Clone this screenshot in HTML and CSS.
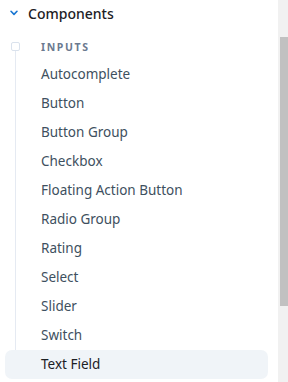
FILE: index.html
```html
<!DOCTYPE html>
<html lang="en">
<head>
    <meta charset="UTF-8">
    <title>Components</title>
    <link rel="stylesheet" href="styles.css">
</head>
<body>
    <div class="frame">
        <nav class="sidebar">
            <div class="group-head">
                <svg class="chevron" width="10" height="6" viewBox="0 0 10 6">
                    <path d="M2 1.3 L5 4.4 L8 1.3" fill="none" stroke="#1976d2" stroke-width="1.6" stroke-linecap="round" stroke-linejoin="round"/>
                </svg>
                <span class="group-title">Components</span>
            </div>
            <div class="tree">
                <div class="section-label">
                    <span class="node"></span>
                    <span>Inputs</span>
                </div>
                <ul class="items">
                    <li class="item">Autocomplete</li>
                    <li class="item">Button</li>
                    <li class="item">Button Group</li>
                    <li class="item">Checkbox</li>
                    <li class="item">Floating Action Button</li>
                    <li class="item">Radio Group</li>
                    <li class="item">Rating</li>
                    <li class="item">Select</li>
                    <li class="item">Slider</li>
                    <li class="item">Switch</li>
                    <li class="item active">Text Field</li>
                </ul>
            </div>
        </nav>
        <div class="scrollbar">
            <div class="thumb"></div>
        </div>
    </div>
</body>
</html>
```

FILE: styles.css
```css
* {
    margin: 0;
    padding: 0;
    box-sizing: border-box;
}

body {
    background: #ffffff;
    font-family: 'Noto Sans', 'Open Sans', sans-serif;
    overflow: hidden;
}

.frame {
    display: flex;
    height: 382px;
}

.sidebar {
    flex: 1;
    overflow: hidden;
}

.group-head {
    display: flex;
    align-items: center;
    height: 26px;
    padding-left: 9px;
}

.chevron {
    margin-right: 9px;
}

.group-title {
    font-size: 14px;
    color: #1c2025;
    font-weight: 500;
}

.tree {
    margin-top: 16px;
    margin-left: 15px;
    border-left: 1px solid #e5eaf2;
}

.section-label {
    display: flex;
    align-items: center;
    height: 9px;
    margin-left: -5px;
    font-size: 10.5px;
    font-weight: 700;
    letter-spacing: 1.6px;
    text-transform: uppercase;
    color: #6b7a90;
}

.node {
    width: 9px;
    height: 9px;
    border: 1px solid #dae2ed;
    border-radius: 2px;
    background: #ffffff;
    margin-right: 21px;
}

.items {
    list-style: none;
    padding-top: 9px;
}

.item {
    height: 29px;
    line-height: 29px;
    padding-left: 36px;
    margin-left: -11px;
    margin-right: 10px;
    font-size: 13.5px;
    color: #3e5060;
    border-radius: 7px;
}

.item.active {
    background: #f0f4f8;
    color: #1c2025;
}

.scrollbar {
    width: 10px;
    background: #f1f1f1;
    padding-left: 2px;
    padding-top: 37px;
}

.thumb {
    height: 269px;
    background: #c1c1c1;
}
```
